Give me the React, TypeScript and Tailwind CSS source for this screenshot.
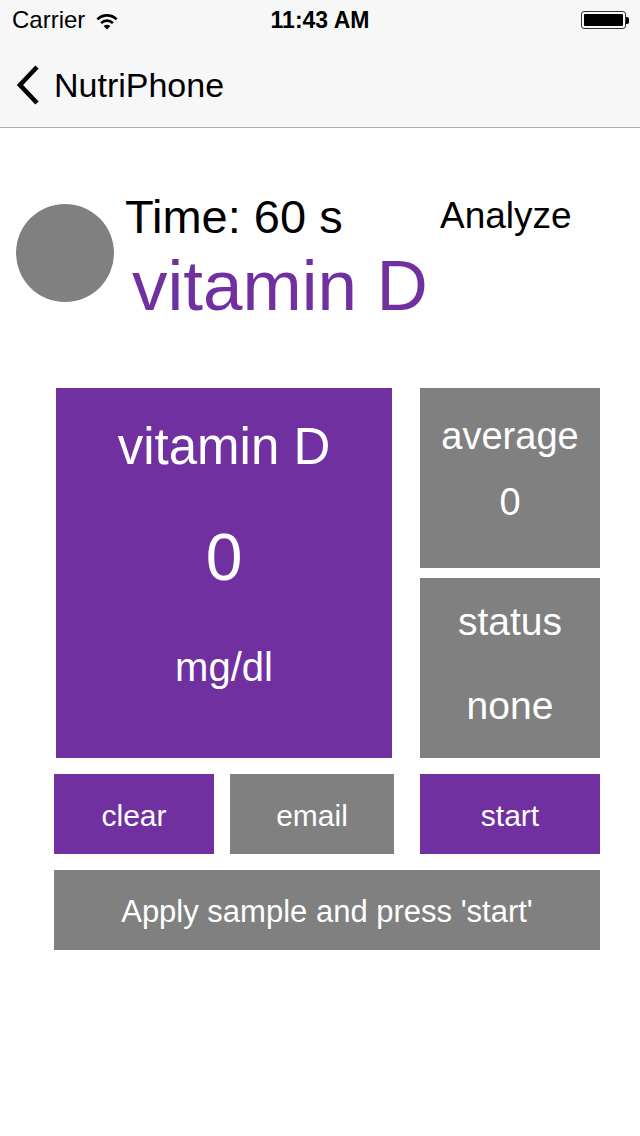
import React from "react";

const purple = "bg-[#7030a0]";
const gray = "bg-[#808080]";

const WifiIcon: React.FC = () => (
  <svg viewBox="0 0 24 18" className="h-[18px] w-[24px]">
    <path
      d="M2.4 7.4 A13.5 13.5 0 0 1 21.6 7.4"
      fill="none"
      stroke="black"
      strokeWidth={2.6}
    />
    <path
      d="M6.1 11.1 A8.3 8.3 0 0 1 17.9 11.1"
      fill="none"
      stroke="black"
      strokeWidth={2.6}
    />
    <path d="M12 17.5 L8.6 14.1 A4.8 4.8 0 0 1 15.4 14.1 Z" fill="black" />
  </svg>
);

const StatusBar: React.FC = () => (
  <div className="relative flex h-[40px] items-center bg-[#f7f7f7] pl-[12px]">
    <span className="text-[24px] leading-none text-black">Carrier</span>
    <span className="ml-[10px] mt-[1px]">
      <WifiIcon />
    </span>
    <span className="absolute left-1/2 top-[9px] -translate-x-1/2 text-[23px] font-bold leading-none text-black">
      11:43 AM
    </span>
    <div className="ml-auto mr-[11px] flex items-center">
      <div className="h-[18px] w-[45px] rounded-[3px] border border-[#333] p-[2px]">
        <div className="h-full w-full rounded-[1px] bg-black" />
      </div>
      <div className="h-[7px] w-[3px] rounded-r-[2px] bg-black" />
    </div>
  </div>
);

const NavBar: React.FC = () => (
  <div className="flex h-[88px] items-center border-b border-[#b2b2b2] bg-[#f7f7f7] pt-[2px]">
    <svg viewBox="0 0 26 42" className="ml-[15px] h-[42px] w-[26px]">
      <polyline
        points="22,3 5,21 22,39"
        fill="none"
        stroke="black"
        strokeWidth={4.6}
        strokeLinecap="butt"
        strokeLinejoin="miter"
      />
    </svg>
    <span className="ml-[13px] text-[34px] leading-none text-black">
      NutriPhone
    </span>
  </div>
);

const Header: React.FC = () => (
  <div className="flex items-start pt-[65px]">
    <div className={`ml-[16px] mt-[11px] h-[98px] w-[98px] shrink-0 rounded-full ${gray}`} />
    <div className="ml-[11px] flex w-[315px] flex-col">
      <span className="whitespace-nowrap text-[47px] leading-none text-black">
        Time: 60 s
      </span>
      <span className="ml-[7px] mt-[10px] whitespace-nowrap text-[71px] leading-none text-[#7030a0]">
        vitamin D
      </span>
    </div>
    <span className="mt-[4px] text-[37px] leading-none text-black">
      Analyze
    </span>
  </div>
);

const Tiles: React.FC = () => (
  <div className="ml-[54px] mt-[67px] w-[546px] text-white">
    <div className="flex">
      <div className={`ml-[2px] flex h-[370px] w-[336px] flex-col items-center ${purple}`}>
        <span className="mt-[33px] text-[51px] leading-none">vitamin D</span>
        <span className="mt-[52px] text-[66px] leading-none">0</span>
        <span className="mt-[57px] text-[40px] leading-none">mg/dl</span>
      </div>
      <div className="ml-[28px] flex w-[180px] flex-col gap-[10px]">
        <div className={`flex h-[180px] flex-col items-center ${gray}`}>
          <span className="mt-[29px] text-[38px] leading-none">average</span>
          <span className="mt-[28px] text-[38px] leading-none">0</span>
        </div>
        <div className={`flex h-[180px] flex-col items-center ${gray}`}>
          <span className="mt-[24px] text-[39px] leading-none">status</span>
          <span className="mt-[45px] text-[39px] leading-none">none</span>
        </div>
      </div>
    </div>
    <div className="mt-[16px] flex h-[80px]">
      <button className={`flex w-[160px] items-center justify-center pt-[3px] text-[30px] leading-none ${purple}`}>
        clear
      </button>
      <button className={`ml-[16px] flex w-[164px] items-center justify-center pt-[3px] text-[30px] leading-none ${gray}`}>
        email
      </button>
      <button className={`ml-[26px] flex w-[180px] items-center justify-center pt-[3px] text-[30px] leading-none ${purple}`}>
        start
      </button>
    </div>
    <div className={`mt-[16px] flex h-[80px] items-center justify-center pt-[3px] text-[31px] leading-none ${gray}`}>
      Apply sample and press 'start'
    </div>
  </div>
);

const App: React.FC = () => {
  return (
    <div className="h-[1136px] w-[640px] overflow-hidden bg-white font-['Liberation_Sans',Arial,sans-serif]">
      <StatusBar />
      <NavBar />
      <Header />
      <Tiles />
    </div>
  );
};

export default App;
